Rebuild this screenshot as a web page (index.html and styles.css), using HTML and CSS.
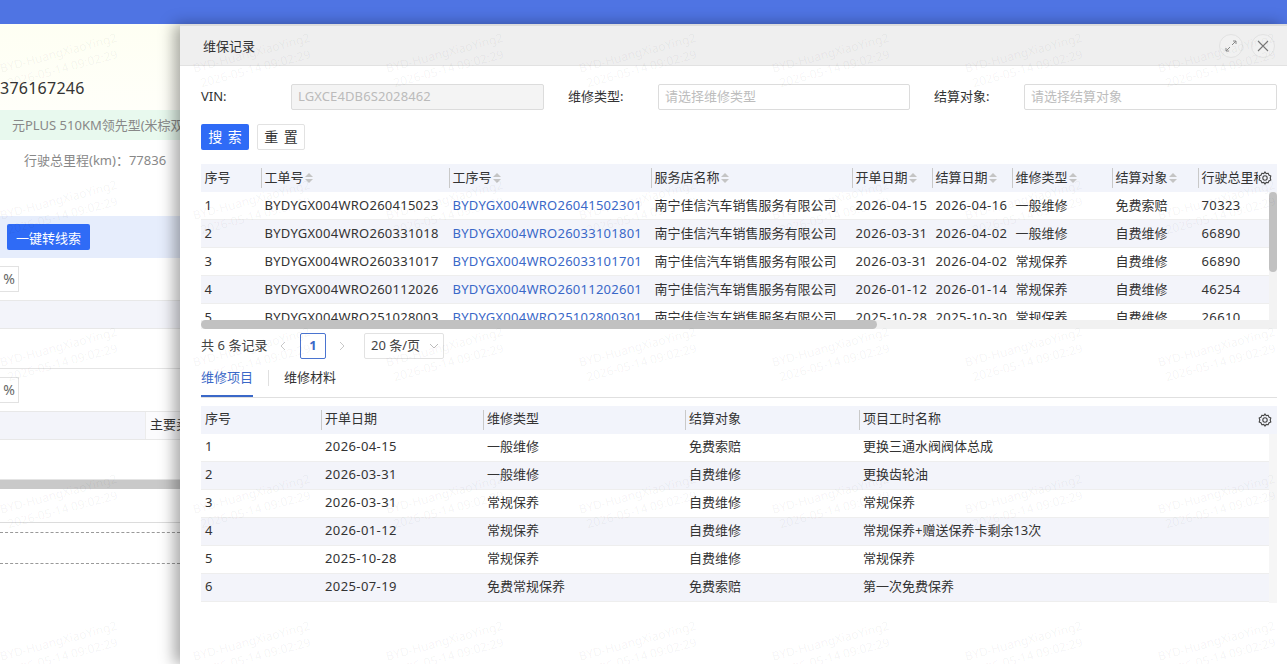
FILE: index.html
```html
<!DOCTYPE html>
<html lang="zh-CN">

<head>
    <meta charset="UTF-8">
    <title>维保记录</title>
    <link rel="stylesheet" href="styles.css">
</head>

<body>
    <div class="topbar"></div>

    <div class="page">
        <div class="page-head">
            <div class="phone">376167246</div>
        </div>
        <div class="model-row">元PLUS 510KM领先型(米棕双色)</div>
        <div class="mileage-row">行驶总里程(km)：77836</div>
        <div class="action-row"><button class="btn-primary btn-lead">一键转线索</button></div>
        <div class="pct-row"><span class="pct-box">%</span></div>
        <div class="band-row"></div>
        <div class="plain-row"></div>
        <div class="pct-row"><span class="pct-box">%</span></div>
        <div class="band-row band-row-main"><span class="band-cell">主要卖点</span></div>
        <div class="tall-row"></div>
        <div class="grey-bar"></div>
        <div class="note-row"></div>
        <div class="dash-row"></div>
        <div class="dash-row dash-row-last"></div>
    </div>

    <div class="drawer">
        <div class="drawer-head">
            <span class="drawer-title">维保记录</span>
            <span class="round-btn">
                <svg width="12" height="12" viewBox="0 0 12 12" fill="none" stroke="#888" stroke-width="1">
                    <path d="M7 5 11 1M8 1h3v3M5 7 1 11M1 8v3h3" />
                </svg>
            </span>
            <span class="round-btn">
                <svg width="12" height="12" viewBox="0 0 12 12" fill="none" stroke="#777" stroke-width="1.1">
                    <path d="M1 1 11 11M11 1 1 11" />
                </svg>
            </span>
        </div>

        <div class="drawer-body">
            <div class="filter-row">
                <label class="filter-label">VIN:</label>
                <input class="filter-input" value="LGXCE4DB6S2028462" disabled>
                <label class="filter-label filter-label-gap">维修类型:</label>
                <input class="filter-input" placeholder="请选择维修类型">
                <label class="filter-label filter-label-gap">结算对象:</label>
                <input class="filter-input" placeholder="请选择结算对象">
            </div>

            <div class="button-row">
                <button class="btn-primary btn-search">搜 索</button>
                <button class="btn-default">重 置</button>
            </div>

            <div class="grid-wrap grid-top">
                <table class="grid">
                    <colgroup>
                        <col style="width:60px">
                        <col style="width:188px">
                        <col style="width:202px">
                        <col style="width:201px">
                        <col style="width:80px">
                        <col style="width:80px">
                        <col style="width:100px">
                        <col style="width:86px">
                        <col style="width:79px">
                    </colgroup>
                    <thead>
                        <tr>
                            <th>序号</th>
                            <th class="sep">工单号<i class="sort"></i></th>
                            <th class="sep">工序号<i class="sort"></i></th>
                            <th class="sep">服务店名称<i class="sort"></i></th>
                            <th class="sep">开单日期<i class="sort"></i></th>
                            <th class="sep">结算日期<i class="sort"></i></th>
                            <th class="sep">维修类型<i class="sort"></i></th>
                            <th class="sep">结算对象<i class="sort"></i></th>
                            <th class="sep">行驶总里程</th>
                        </tr>
                    </thead>
                    <tbody>
                        <tr>
                            <td>1</td><td class="code">BYDYGX004WRO260415023</td><td class="code link">BYDYGX004WRO26041502301</td><td>南宁佳信汽车销售服务有限公司</td><td class="date">2026-04-15</td><td class="date">2026-04-16</td><td>一般维修</td><td>免费索赔</td><td class="date">70323</td>
                        </tr>
                        <tr>
                            <td>2</td><td class="code">BYDYGX004WRO260331018</td><td class="code link">BYDYGX004WRO26033101801</td><td>南宁佳信汽车销售服务有限公司</td><td class="date">2026-03-31</td><td class="date">2026-04-02</td><td>一般维修</td><td>自费维修</td><td class="date">66890</td>
                        </tr>
                        <tr>
                            <td>3</td><td class="code">BYDYGX004WRO260331017</td><td class="code link">BYDYGX004WRO26033101701</td><td>南宁佳信汽车销售服务有限公司</td><td class="date">2026-03-31</td><td class="date">2026-04-02</td><td>常规保养</td><td>自费维修</td><td class="date">66890</td>
                        </tr>
                        <tr>
                            <td>4</td><td class="code">BYDYGX004WRO260112026</td><td class="code link">BYDYGX004WRO26011202601</td><td>南宁佳信汽车销售服务有限公司</td><td class="date">2026-01-12</td><td class="date">2026-01-14</td><td>常规保养</td><td>自费维修</td><td class="date">46254</td>
                        </tr>
                        <tr>
                            <td>5</td><td class="code">BYDYGX004WRO251028003</td><td class="code link">BYDYGX004WRO25102800301</td><td>南宁佳信汽车销售服务有限公司</td><td class="date">2025-10-28</td><td class="date">2025-10-30</td><td>常规保养</td><td>自费维修</td><td class="date">26610</td>
                        </tr>
                    </tbody>
                </table>
                <svg class="gear" width="14" height="14" viewBox="0 0 14 14" fill="none" stroke="#444" stroke-width="1.1">
                    <path d="M7 1 8.2 2.6 10.2 2.3 10.9 4.1 12.8 5 12.2 7 12.8 9 10.9 9.9 10.2 11.7 8.2 11.4 7 13 5.8 11.4 3.8 11.7 3.1 9.9 1.2 9 1.8 7 1.2 5 3.1 4.1 3.8 2.3 5.8 2.6Z" />
                    <circle cx="7" cy="7" r="2.2" />
                </svg>
                <div class="vtrack"><div class="vthumb"></div></div>
                <div class="htrack"><div class="hthumb"></div></div>
            </div>

            <div class="pager">
                <span class="pager-total">共 6 条记录</span>
                <svg class="pager-arrow" width="8" height="10" viewBox="0 0 8 10" fill="none" stroke="#c8c8c8">
                    <path d="M6 1 2 5 6 9" />
                </svg>
                <span class="pager-num">1</span>
                <svg class="pager-arrow" width="8" height="10" viewBox="0 0 8 10" fill="none" stroke="#c8c8c8">
                    <path d="M2 1 6 5 2 9" />
                </svg>
                <span class="pager-size"><span class="pager-size-text">20 条/页</span>
                    <svg width="10" height="6" viewBox="0 0 10 6" fill="none" stroke="#bbb">
                        <path d="M1 1 5 5 9 1" />
                    </svg>
                </span>
            </div>

            <div class="tabs">
                <span class="tab tab-active">维修项目</span>
                <span class="tab-sep"></span>
                <span class="tab">维修材料</span>
            </div>

            <div class="grid-wrap grid-bottom">
                <table class="grid">
                    <colgroup>
                        <col style="width:120px">
                        <col style="width:162px">
                        <col style="width:202px">
                        <col style="width:174px">
                        <col style="width:418px">
                    </colgroup>
                    <thead>
                        <tr>
                            <th>序号</th>
                            <th class="sep">开单日期</th>
                            <th class="sep">维修类型</th>
                            <th class="sep">结算对象</th>
                            <th class="sep">项目工时名称</th>
                        </tr>
                    </thead>
                    <tbody>
                        <tr><td>1</td><td class="date">2026-04-15</td><td>一般维修</td><td>免费索赔</td><td>更换三通水阀阀体总成</td></tr>
                        <tr><td>2</td><td class="date">2026-03-31</td><td>一般维修</td><td>自费维修</td><td>更换齿轮油</td></tr>
                        <tr><td>3</td><td class="date">2026-03-31</td><td>常规保养</td><td>自费维修</td><td>常规保养</td></tr>
                        <tr><td>4</td><td class="date">2026-01-12</td><td>常规保养</td><td>自费维修</td><td>常规保养+赠送保养卡剩余13次</td></tr>
                        <tr><td>5</td><td class="date">2025-10-28</td><td>常规保养</td><td>自费维修</td><td>常规保养</td></tr>
                        <tr><td>6</td><td class="date">2025-07-19</td><td>免费常规保养</td><td>免费索赔</td><td>第一次免费保养</td></tr>
                    </tbody>
                </table>
                <svg class="gear" width="14" height="14" viewBox="0 0 14 14" fill="none" stroke="#444" stroke-width="1.1">
                    <path d="M7 1 8.2 2.6 10.2 2.3 10.9 4.1 12.8 5 12.2 7 12.8 9 10.9 9.9 10.2 11.7 8.2 11.4 7 13 5.8 11.4 3.8 11.7 3.1 9.9 1.2 9 1.8 7 1.2 5 3.1 4.1 3.8 2.3 5.8 2.6Z" />
                    <circle cx="7" cy="7" r="2.2" />
                </svg>
                <div class="vtrack vtrack-pale"></div>
            </div>
        </div>
    </div>

    <div class="watermarks">
        <span class="wm">BYD-HuangXiaoYing2<br>2026-05-14 09:02:29</span>
        <span class="wm">BYD-HuangXiaoYing2<br>2026-05-14 09:02:29</span>
        <span class="wm">BYD-HuangXiaoYing2<br>2026-05-14 09:02:29</span>
        <span class="wm">BYD-HuangXiaoYing2<br>2026-05-14 09:02:29</span>
        <span class="wm">BYD-HuangXiaoYing2<br>2026-05-14 09:02:29</span>
        <span class="wm">BYD-HuangXiaoYing2<br>2026-05-14 09:02:29</span>
        <span class="wm">BYD-HuangXiaoYing2<br>2026-05-14 09:02:29</span>
        <span class="wm">BYD-HuangXiaoYing2<br>2026-05-14 09:02:29</span>
        <span class="wm">BYD-HuangXiaoYing2<br>2026-05-14 09:02:29</span>
        <span class="wm">BYD-HuangXiaoYing2<br>2026-05-14 09:02:29</span>
        <span class="wm">BYD-HuangXiaoYing2<br>2026-05-14 09:02:29</span>
        <span class="wm">BYD-HuangXiaoYing2<br>2026-05-14 09:02:29</span>
        <span class="wm">BYD-HuangXiaoYing2<br>2026-05-14 09:02:29</span>
        <span class="wm">BYD-HuangXiaoYing2<br>2026-05-14 09:02:29</span>
        <span class="wm">BYD-HuangXiaoYing2<br>2026-05-14 09:02:29</span>
        <span class="wm">BYD-HuangXiaoYing2<br>2026-05-14 09:02:29</span>
        <span class="wm">BYD-HuangXiaoYing2<br>2026-05-14 09:02:29</span>
        <span class="wm">BYD-HuangXiaoYing2<br>2026-05-14 09:02:29</span>
        <span class="wm">BYD-HuangXiaoYing2<br>2026-05-14 09:02:29</span>
        <span class="wm">BYD-HuangXiaoYing2<br>2026-05-14 09:02:29</span>
        <span class="wm">BYD-HuangXiaoYing2<br>2026-05-14 09:02:29</span>
        <span class="wm">BYD-HuangXiaoYing2<br>2026-05-14 09:02:29</span>
        <span class="wm">BYD-HuangXiaoYing2<br>2026-05-14 09:02:29</span>
        <span class="wm">BYD-HuangXiaoYing2<br>2026-05-14 09:02:29</span>
        <span class="wm">BYD-HuangXiaoYing2<br>2026-05-14 09:02:29</span>
        <span class="wm">BYD-HuangXiaoYing2<br>2026-05-14 09:02:29</span>
        <span class="wm">BYD-HuangXiaoYing2<br>2026-05-14 09:02:29</span>
        <span class="wm">BYD-HuangXiaoYing2<br>2026-05-14 09:02:29</span>
        <span class="wm">BYD-HuangXiaoYing2<br>2026-05-14 09:02:29</span>
        <span class="wm">BYD-HuangXiaoYing2<br>2026-05-14 09:02:29</span>
        <span class="wm">BYD-HuangXiaoYing2<br>2026-05-14 09:02:29</span>
        <span class="wm">BYD-HuangXiaoYing2<br>2026-05-14 09:02:29</span>
        <span class="wm">BYD-HuangXiaoYing2<br>2026-05-14 09:02:29</span>
        <span class="wm">BYD-HuangXiaoYing2<br>2026-05-14 09:02:29</span>
        <span class="wm">BYD-HuangXiaoYing2<br>2026-05-14 09:02:29</span>
    </div>
</body>

</html>
```
FILE: styles.css
```css
* {
    box-sizing: border-box;
    margin: 0;
    padding: 0;
}

html,
body {
    height: 100%;
    overflow: hidden;
}

body {
    font-family: "Noto Sans", "Noto Sans CJK SC", sans-serif;
    font-size: 13px;
    color: #333;
    background: #fff;
}

.topbar {
    height: 24px;
    background: #4f74e3;
}

/* page behind the drawer */
.page {
    width: 180px;
    overflow: hidden;
    white-space: nowrap;
}

.page-head {
    height: 86px;
    background: linear-gradient(#feffF3, #fffff9);
    padding-top: 52px;
}

.phone {
    font-size: 16px;
    line-height: 24px;
    letter-spacing: 0.25px;
    color: #333;
}

.model-row {
    height: 30px;
    padding-left: 12px;
    line-height: 30px;
    background: #e8f9ee;
    color: #888;
}

.mileage-row {
    height: 76px;
    padding: 11px 0 0 24px;
    line-height: 18px;
    color: #888;
}

.action-row {
    height: 42px;
    padding: 8px 0 0 7px;
    background: #e6edfc;
}

.btn-primary {
    border: none;
    border-radius: 2px;
    background: #2f6bf6;
    color: #fff;
    font: inherit;
}

.btn-lead {
    display: block;
    width: 83px;
    height: 26px;
}

.pct-row {
    height: 42px;
    padding-top: 8px;
}

.pct-box {
    display: block;
    width: 19px;
    height: 26px;
    border: 1px solid #e2e2e2;
    border-left: none;
    font-size: 14px;
    line-height: 24px;
    text-align: center;
    color: #666;
}

.band-row {
    height: 29px;
    background: #f3f4fa;
    border-top: 1px solid #e8e8e8;
    border-bottom: 1px solid #e8e8e8;
}

.band-row-main {
    padding-left: 145px;
}

.band-cell {
    display: block;
    height: 27px;
    padding-left: 4px;
    line-height: 25px;
    background: #fbfbfd;
    border-left: 1px solid #ececec;
}

.plain-row {
    height: 40px;
    border-bottom: 1px solid #e4e4e4;
}

.tall-row {
    height: 40px;
    border-bottom: 1px solid #e4e4e4;
}

.grey-bar {
    height: 9px;
    background: #c9c9c9;
}

.note-row {
    height: 34px;
    border-bottom: 1px solid #dcdcdc;
}

.dash-row {
    height: 10px;
    border-bottom: 1px dashed #999;
}

.dash-row-last {
    height: 31px;
}

/* drawer */
.drawer {
    position: absolute;
    left: 180px;
    top: 24px;
    right: 0;
    bottom: 0;
    background: #fff;
    border-top: 2px solid #dcdcdc;
    box-shadow: -6px 0 14px rgba(0, 0, 0, 0.34);
}

.drawer-head {
    display: flex;
    align-items: center;
    gap: 8px;
    height: 40px;
    padding: 0 12px 0 23px;
    background: #efefef;
    border-bottom: 1px solid #e2e2e2;
}

.drawer-title {
    flex: 1;
    color: #333;
}

.round-btn {
    display: flex;
    align-items: center;
    justify-content: center;
    width: 24px;
    height: 24px;
    border-radius: 50%;
    background: #f1f1f1;
    border: 1px solid #e2e2e2;
}

.drawer-body {
    padding: 18px 10px 0 21px;
}

.filter-row {
    display: grid;
    grid-template-columns: 90px 253px 114px 252px 114px 253px;
    align-items: center;
    height: 26px;
}

.filter-label {
    padding-bottom: 3px;
    color: #333;
}

.filter-label-gap {
    padding-left: 24px;
}

.filter-input {
    width: 100%;
    height: 26px;
    padding: 0 6px 2px;
    border: 1px solid #dcdcdc;
    border-radius: 2px;
    font: inherit;
    outline: none;
    background: #fff;
}

.filter-input::placeholder {
    color: #bdbdbd;
}

.filter-input:disabled {
    background: #f4f4f4;
    color: #bbb;
    letter-spacing: 0.12px;
}

.button-row {
    display: flex;
    gap: 8px;
    margin-top: 14px;
}

.btn-search,
.btn-default {
    width: 48px;
    height: 26px;
    padding-bottom: 2px;
    border-radius: 2px;
    font: inherit;
    font-size: 14px;
    word-spacing: 2px;
}

.btn-default {
    border: 1px solid #e2e2e2;
    background: #fff;
    color: #333;
}

.grid-wrap {
    position: relative;
    overflow: hidden;
}

.grid-top {
    height: 165px;
    margin-top: 14px;
}

.grid-bottom {
    height: 197px;
    margin-top: 8px;
}

.grid {
    width: 1076px;
    table-layout: fixed;
    border-collapse: separate;
    border-spacing: 0;
}

.grid th {
    position: relative;
    height: 28px;
    padding: 0 3.5px 5px;
    background: #f2f4fb;
    font-weight: 400;
    text-align: left;
    white-space: nowrap;
    overflow: hidden;
}

.grid th.sep::before {
    content: "";
    position: absolute;
    left: 0;
    top: 4px;
    bottom: 4px;
    width: 1px;
    background: #c9c9c9;
}

.grid td {
    height: 28px;
    padding: 0 3.5px 4px;
    white-space: nowrap;
    overflow: hidden;
    border-bottom: 1px solid #eee;
    color: #333;
}

.grid-top .grid th {
    padding-bottom: 3px;
}

.grid-top .grid td {
    padding-bottom: 2px;
}

.grid-bottom .grid th,
.grid-bottom .grid td {
    padding-left: 4px;
}

.grid td.code {
    letter-spacing: 0.25px;
}

.grid td.date {
    letter-spacing: 0.4px;
}

.grid tbody tr:nth-child(even) td {
    background: #f3f4fa;
}

.grid td.link {
    color: #3a68c8;
}

.sort {
    display: inline-block;
    position: relative;
    width: 8px;
    height: 10px;
    margin-left: 1px;
    vertical-align: -1px;
}

.sort::before,
.sort::after {
    content: "";
    position: absolute;
    left: 0;
    border-left: 4px solid transparent;
    border-right: 4px solid transparent;
}

.sort::before {
    top: 0;
    border-bottom: 4px solid #c4c4c4;
}

.sort::after {
    bottom: 0;
    border-top: 4px solid #c4c4c4;
}

.gear {
    position: absolute;
    right: 5px;
    top: 7px;
    background: #f2f4fb;
}

.vtrack {
    position: absolute;
    right: 0;
    top: 28px;
    bottom: 0;
    width: 8px;
    background: #f3f3f3;
}

.vtrack-pale {
    background: #f6f6f6;
}

.vthumb {
    width: 8px;
    height: 80px;
    border-radius: 4px;
    background: #c1c1c1;
}

.htrack {
    position: absolute;
    left: 0;
    right: 0;
    bottom: 0;
    height: 9px;
    background: #f1f1f1;
}

.hthumb {
    width: 676px;
    height: 9px;
    border-radius: 5px;
    background: #c1c1c1;
}

.pager {
    display: flex;
    align-items: center;
    height: 26px;
    margin-top: 4px;
    color: #444;
}

.pager-total {
    width: 74px;
    padding-bottom: 3px;
    letter-spacing: 0.05px;
}

.pager-arrow {
    margin: 0 4px;
}

.pager-num {
    width: 26px;
    height: 26px;
    margin: 0 8px 0 9px;
    border: 1px solid #4a74d0;
    border-radius: 2px;
    color: #3a68c8;
    font-weight: 700;
    line-height: 22px;
    text-align: center;
}

.pager-size {
    display: flex;
    align-items: center;
    justify-content: space-between;
    width: 80px;
    height: 26px;
    margin-left: 14px;
    padding: 0 4px 0 6px;
    border: 1px solid #e2e2e2;
    border-radius: 2px;
}

.pager-size-text {
    padding-bottom: 3px;
}

.tabs {
    display: flex;
    align-items: center;
    height: 39px;
    border-bottom: 1px solid #e0e0e0;
}

.tab {
    height: 38px;
    line-height: 36px;
    color: #333;
}

.tab-active {
    color: #3a68c8;
    border-bottom: 2px solid #3a68c8;
}

.tab-sep {
    width: 1px;
    height: 16px;
    margin: 0 15px;
    background: #e0e0e0;
}

/* watermark layer, sits over everything */
.watermarks {
    position: absolute;
    left: -36px;
    top: -13px;
    display: grid;
    grid-template-columns: repeat(7, 193px);
    grid-auto-rows: 147px;
    pointer-events: none;
}

.wm {
    align-self: center;
    font-size: 12px;
    line-height: 16px;
    text-align: center;
    color: rgba(0, 0, 0, 0.05);
    transform: rotate(-15deg);
    white-space: nowrap;
}
```
